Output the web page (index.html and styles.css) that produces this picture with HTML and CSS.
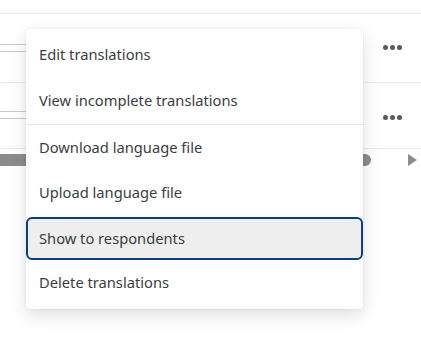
FILE: index.html
```html
<!DOCTYPE html>
<html>
<head>
<meta charset="utf-8">
<link rel="stylesheet" href="styles.css">
</head>
<body>
<div class="page">
  <div class="table">
    <div class="row">
      <div class="cell-main"><span class="field"></span></div>
      <div class="cell-actions"><span class="dots"><i></i><i></i><i></i></span></div>
    </div>
    <div class="row">
      <div class="cell-main"><span class="field"></span></div>
      <div class="cell-actions"><span class="dots"><i></i><i></i><i></i></span></div>
    </div>
    <div class="scrollbar">
      <div class="thumb"></div>
      <div class="arrow"></div>
    </div>
  </div>

  <ul class="menu">
    <li class="item">Edit translations</li>
    <li class="item">View incomplete translations</li>
    <li class="sep"></li>
    <li class="item short">Download language file</li>
    <li class="item short">Upload language file</li>
    <li class="item short focus">Show to respondents</li>
    <li class="item short">Delete translations</li>
  </ul>
</div>
</body>
</html>
```

FILE: styles.css
```css
html, body {
  margin: 0;
  padding: 0;
  background: #ffffff;
}
.page {
  position: relative;
  width: 421px;
  height: 343px;
  overflow: hidden;
  font-family: "Noto Sans", "Open Sans", sans-serif;
}
.table {
  padding-top: 13px;
}
.row {
  display: flex;
  border-top: 1px solid #ebebeb;
  height: 68px;
}
.row + .row {
  height: 65px;
  border-bottom: 1px solid #ebebeb;
}
.cell-main {
  flex: 1;
  padding-top: 30px;
}
.row + .row .cell-main {
  padding-top: 28px;
}
.field {
  display: block;
  width: 340px;
  height: 6px;
  border-top: 1px solid #c9c9c9;
  border-bottom: 1px solid #c9c9c9;
}
.cell-actions {
  width: 58px;
  display: flex;
  justify-content: center;
  padding-top: 31px;
  box-sizing: border-box;
}
.row + .row .cell-actions {
  padding-top: 32px;
}
.dots {
  display: flex;
  gap: 2px;
  height: 5px;
}
.dots i {
  display: block;
  width: 5px;
  height: 5px;
  border-radius: 50%;
  background: #555a5f;
}
.scrollbar {
  display: flex;
  align-items: center;
  margin-top: 5px;
  height: 12px;
}
.thumb {
  width: 371px;
  height: 12px;
  background: #8c8c8c;
  border-radius: 0 6px 6px 0;
}
.arrow {
  margin-left: 37px;
  width: 0;
  height: 0;
  border-top: 6px solid transparent;
  border-bottom: 6px solid transparent;
  border-left: 9px solid #8c8c8c;
}
.menu {
  position: absolute;
  left: 26px;
  top: 29px;
  width: 337px;
  margin: 0;
  padding: 3px 0 4px;
  list-style: none;
  background: #ffffff;
  border-radius: 4px;
  box-shadow: 0 6px 18px rgba(0, 0, 0, 0.13), 0 0 3px rgba(0, 0, 0, 0.08);
}
.item {
  height: 46px;
  display: flex;
  align-items: center;
  padding-left: 13px;
  padding-bottom: 2px;
  font-size: 14.7px;
  color: #3a3e42;
  box-sizing: border-box;
}
.item.short {
  height: 45px;
}
.sep {
  height: 1px;
  background: #e4e4e4;
}
.item.focus {
  height: 43px;
  margin-top: 2px;
  background: #eeeeee;
  border: 2px solid #0b3f7c;
  border-radius: 6px;
  padding-left: 11px;
  padding-bottom: 1px;
}
```
